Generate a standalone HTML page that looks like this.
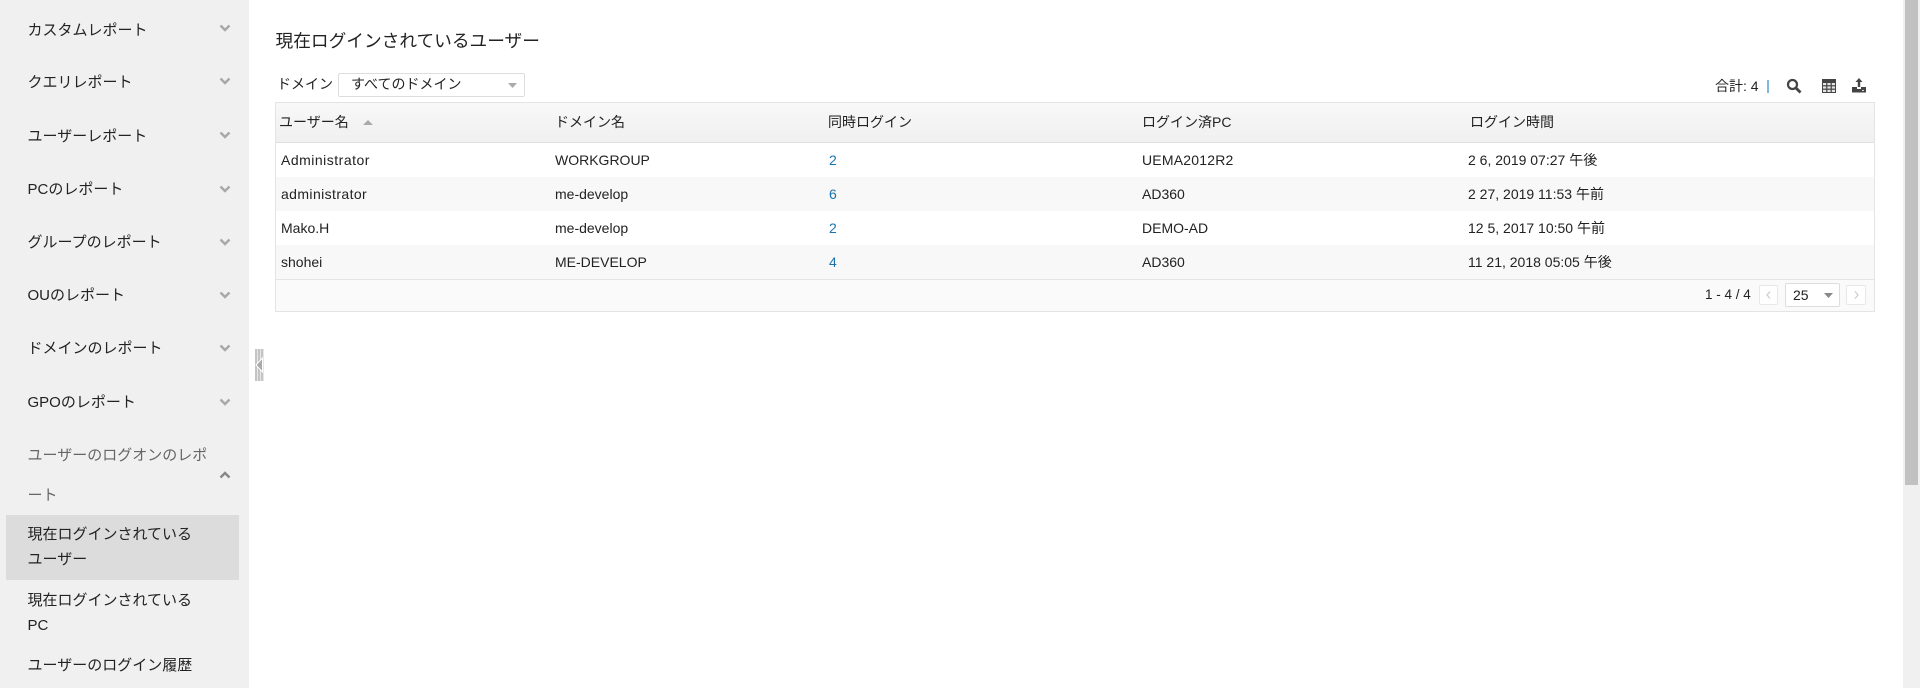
<!DOCTYPE html>
<html lang="ja">
<head>
<meta charset="utf-8">
<title>現在ログインされているユーザー</title>
<style>
html,body{margin:0;padding:0;width:1920px;height:688px;overflow:hidden;background:#fff;}
body{position:relative;font-family:"Liberation Sans","Noto Sans CJK JP",sans-serif;font-size:14px;color:#222;}
.t{position:absolute;white-space:nowrap;line-height:20px;height:20px;}
.b{position:absolute;box-sizing:border-box;}
.s{font-size:15px;left:27.5px;}
svg{position:absolute;display:block;}
.c{left:219px;width:12px;height:8px;}
.l{color:#1a73ae;}
</style>
</head>
<body>
<div class="b" style="left:0;top:0;width:249px;height:688px;background:#f0f0f0"></div>
<div class="b" style="left:6px;top:515px;width:233px;height:65px;background:#dcdcdc"></div>

<div class="t s" style="top:21px">カスタムレポート</div>
<div class="t s" style="top:73px">クエリレポート</div>
<div class="t s" style="top:127px">ユーザーレポート</div>
<div class="t s" style="top:180px">PCのレポート</div>
<div class="t s" style="top:233px">グループのレポート</div>
<div class="t s" style="top:286px">OUのレポート</div>
<div class="t s" style="top:339px">ドメインのレポート</div>
<div class="t s" style="top:393px">GPOのレポート</div>
<div class="t s" style="top:446px;color:#666">ユーザーのログオンのレポ</div>
<div class="t s" style="top:486px;color:#666">ート</div>
<div class="t s" style="top:525px">現在ログインされている</div>
<div class="t s" style="top:550px">ユーザー</div>
<div class="t s" style="top:591px">現在ログインされている</div>
<div class="t s" style="top:616px">PC</div>
<div class="t s" style="top:656px">ユーザーのログイン履歴</div>

<svg class="c" style="top:24px" viewBox="0 0 12 8"><path d="M1.5 1.5L6 6L10.5 1.5" fill="none" stroke="#a8a8a8" stroke-width="2.4"/></svg>
<svg class="c" style="top:77px" viewBox="0 0 12 8"><path d="M1.5 1.5L6 6L10.5 1.5" fill="none" stroke="#a8a8a8" stroke-width="2.4"/></svg>
<svg class="c" style="top:131px" viewBox="0 0 12 8"><path d="M1.5 1.5L6 6L10.5 1.5" fill="none" stroke="#a8a8a8" stroke-width="2.4"/></svg>
<svg class="c" style="top:185px" viewBox="0 0 12 8"><path d="M1.5 1.5L6 6L10.5 1.5" fill="none" stroke="#a8a8a8" stroke-width="2.4"/></svg>
<svg class="c" style="top:238px" viewBox="0 0 12 8"><path d="M1.5 1.5L6 6L10.5 1.5" fill="none" stroke="#a8a8a8" stroke-width="2.4"/></svg>
<svg class="c" style="top:291px" viewBox="0 0 12 8"><path d="M1.5 1.5L6 6L10.5 1.5" fill="none" stroke="#a8a8a8" stroke-width="2.4"/></svg>
<svg class="c" style="top:344px" viewBox="0 0 12 8"><path d="M1.5 1.5L6 6L10.5 1.5" fill="none" stroke="#a8a8a8" stroke-width="2.4"/></svg>
<svg class="c" style="top:398px" viewBox="0 0 12 8"><path d="M1.5 1.5L6 6L10.5 1.5" fill="none" stroke="#a8a8a8" stroke-width="2.4"/></svg>
<svg class="c" style="top:471px" viewBox="0 0 12 8"><path d="M1.5 6.5L6 2L10.5 6.5" fill="none" stroke="#888" stroke-width="2.4"/></svg>

<!-- splitter -->
<svg style="left:255px;top:349px" width="9" height="32" viewBox="0 0 9 32">
<rect width="9" height="32" fill="#e6e6e6"/>
<rect x="0" width="2" height="32" fill="#c4c4c4"/>
<rect x="3" width="2" height="32" fill="#c4c4c4"/>
<rect x="6" width="2" height="32" fill="#c4c4c4"/>
<path d="M1 16L7.5 9V23Z" fill="#aaa" stroke="#fff" stroke-width="1"/>
</svg>

<!-- heading -->
<div class="t" style="left:275.5px;top:31px;font-size:17.7px;color:#222">現在ログインされているユーザー</div>
<div class="t" style="left:277px;top:74px">ドメイン</div>
<div class="b" style="left:338px;top:73px;width:187px;height:24px;border:1px solid #ddd;border-radius:2px;background:#fff"></div>
<div class="t" style="left:351px;top:74px">すべてのドメイン</div>
<svg style="left:508px;top:83px" width="9" height="5"><path d="M0 0H9L4.5 5Z" fill="#aaa"/></svg>

<div class="t" style="left:1715px;top:76px">合計: 4</div>
<div class="b" style="left:1767px;top:80px;width:2px;height:13px;background:#7fb9de"></div>
<svg style="left:1786px;top:78px" width="16" height="16" viewBox="0 0 16 16"><circle cx="6.5" cy="6.5" r="4.5" fill="none" stroke="#444" stroke-width="2.2"/><path d="M10 10L14.5 14.5" stroke="#444" stroke-width="2.8"/></svg>
<svg style="left:1822px;top:79px" width="14" height="14" viewBox="0 0 14 14"><rect width="14" height="14" fill="#444"/><g fill="#e4e4e4"><rect x="1" y="4" width="3.2" height="2.2"/><rect x="5.4" y="4" width="3.2" height="2.2"/><rect x="9.8" y="4" width="3.2" height="2.2"/><rect x="1" y="7.4" width="3.2" height="2.2"/><rect x="5.4" y="7.4" width="3.2" height="2.2"/><rect x="9.8" y="7.4" width="3.2" height="2.2"/><rect x="1" y="10.8" width="3.2" height="2.2"/><rect x="5.4" y="10.8" width="3.2" height="2.2"/><rect x="9.8" y="10.8" width="3.2" height="2.2"/></g></svg>
<svg style="left:1852px;top:78px" width="14" height="15" viewBox="0 0 14 15"><path d="M7 0L10.5 4H8.2V9H5.8V4H3.5Z" fill="#444"/><path d="M0 9H5V11H9V9H14V14.5H0Z" fill="#444"/><rect x="10" y="12" width="2" height="1" fill="#ddd"/></svg>

<!-- table -->
<div class="b" style="left:275px;top:102px;width:1600px;height:210px;border:1px solid #e4e4e4;background:#fff"></div>
<div class="b" style="left:276px;top:103px;width:1598px;height:40px;background:linear-gradient(#f8f8f8,#f0f0f0);border-bottom:1px solid #e0e0e0"></div>
<div class="b" style="left:276px;top:177px;width:1598px;height:34px;background:#f8f8f8"></div>
<div class="b" style="left:276px;top:245px;width:1598px;height:34px;background:#f8f8f8"></div>
<div class="b" style="left:276px;top:279px;width:1598px;height:32px;background:#fafafa;border-top:1px solid #e4e4e4"></div>

<div class="t" style="left:279px;top:112px">ユーザー名</div>
<svg style="left:363px;top:120px" width="10" height="5"><path d="M5 0L10 5H0Z" fill="#aaa"/></svg>
<div class="t" style="left:555px;top:112px">ドメイン名</div>
<div class="t" style="left:828px;top:112px">同時ログイン</div>
<div class="t" style="left:1142px;top:112px">ログイン済PC</div>
<div class="t" style="left:1470px;top:112px">ログイン時間</div>

<div class="t" style="left:281px;top:150px;letter-spacing:.5px">Administrator</div>
<div class="t" style="left:555px;top:150px">WORKGROUP</div>
<div class="t l" style="left:829px;top:150px">2</div>
<div class="t" style="left:1142px;top:150px;letter-spacing:.2px">UEMA2012R2</div>
<div class="t" style="left:1468px;top:150px">2 6, 2019 07:27 午後</div>

<div class="t" style="left:281px;top:184px;letter-spacing:.4px">administrator</div>
<div class="t" style="left:555px;top:184px">me-develop</div>
<div class="t l" style="left:829px;top:184px">6</div>
<div class="t" style="left:1142px;top:184px">AD360</div>
<div class="t" style="left:1468px;top:184px">2 27, 2019 11:53 午前</div>

<div class="t" style="left:281px;top:218px">Mako.H</div>
<div class="t" style="left:555px;top:218px">me-develop</div>
<div class="t l" style="left:829px;top:218px">2</div>
<div class="t" style="left:1142px;top:218px">DEMO-AD</div>
<div class="t" style="left:1468px;top:218px">12 5, 2017 10:50 午前</div>

<div class="t" style="left:281px;top:252px">shohei</div>
<div class="t" style="left:555px;top:252px">ME-DEVELOP</div>
<div class="t l" style="left:829px;top:252px">4</div>
<div class="t" style="left:1142px;top:252px">AD360</div>
<div class="t" style="left:1468px;top:252px">11 21, 2018 05:05 午後</div>

<!-- pager -->
<div class="t" style="left:1705px;top:285px;font-size:13.5px">1 - 4 / 4</div>
<div class="b" style="left:1759px;top:285px;width:19px;height:20px;border:1px solid #e8e8e8;border-radius:2px;background:#fff"></div>
<svg style="left:1766px;top:291px" width="5" height="8"><path d="M4 .5L1 4L4 7.5" fill="none" stroke="#ccc" stroke-width="1.2"/></svg>
<div class="b" style="left:1785px;top:283px;width:55px;height:24px;border:1px solid #ddd;border-radius:2px;background:#fff"></div>
<div class="t" style="left:1793px;top:285px">25</div>
<svg style="left:1824px;top:293px" width="9" height="5"><path d="M0 0H9L4.5 5Z" fill="#888"/></svg>
<div class="b" style="left:1846px;top:285px;width:20px;height:20px;border:1px solid #e8e8e8;border-radius:2px;background:#fff"></div>
<svg style="left:1854px;top:291px" width="5" height="8"><path d="M1 .5L4 4L1 7.5" fill="none" stroke="#ccc" stroke-width="1.2"/></svg>

<!-- scrollbar -->
<div class="b" style="left:1903px;top:0;width:17px;height:688px;background:#f0f0f0"></div>
<div class="b" style="left:1905px;top:0;width:13px;height:485px;background:#c1c1c1"></div>
</body>
</html>
